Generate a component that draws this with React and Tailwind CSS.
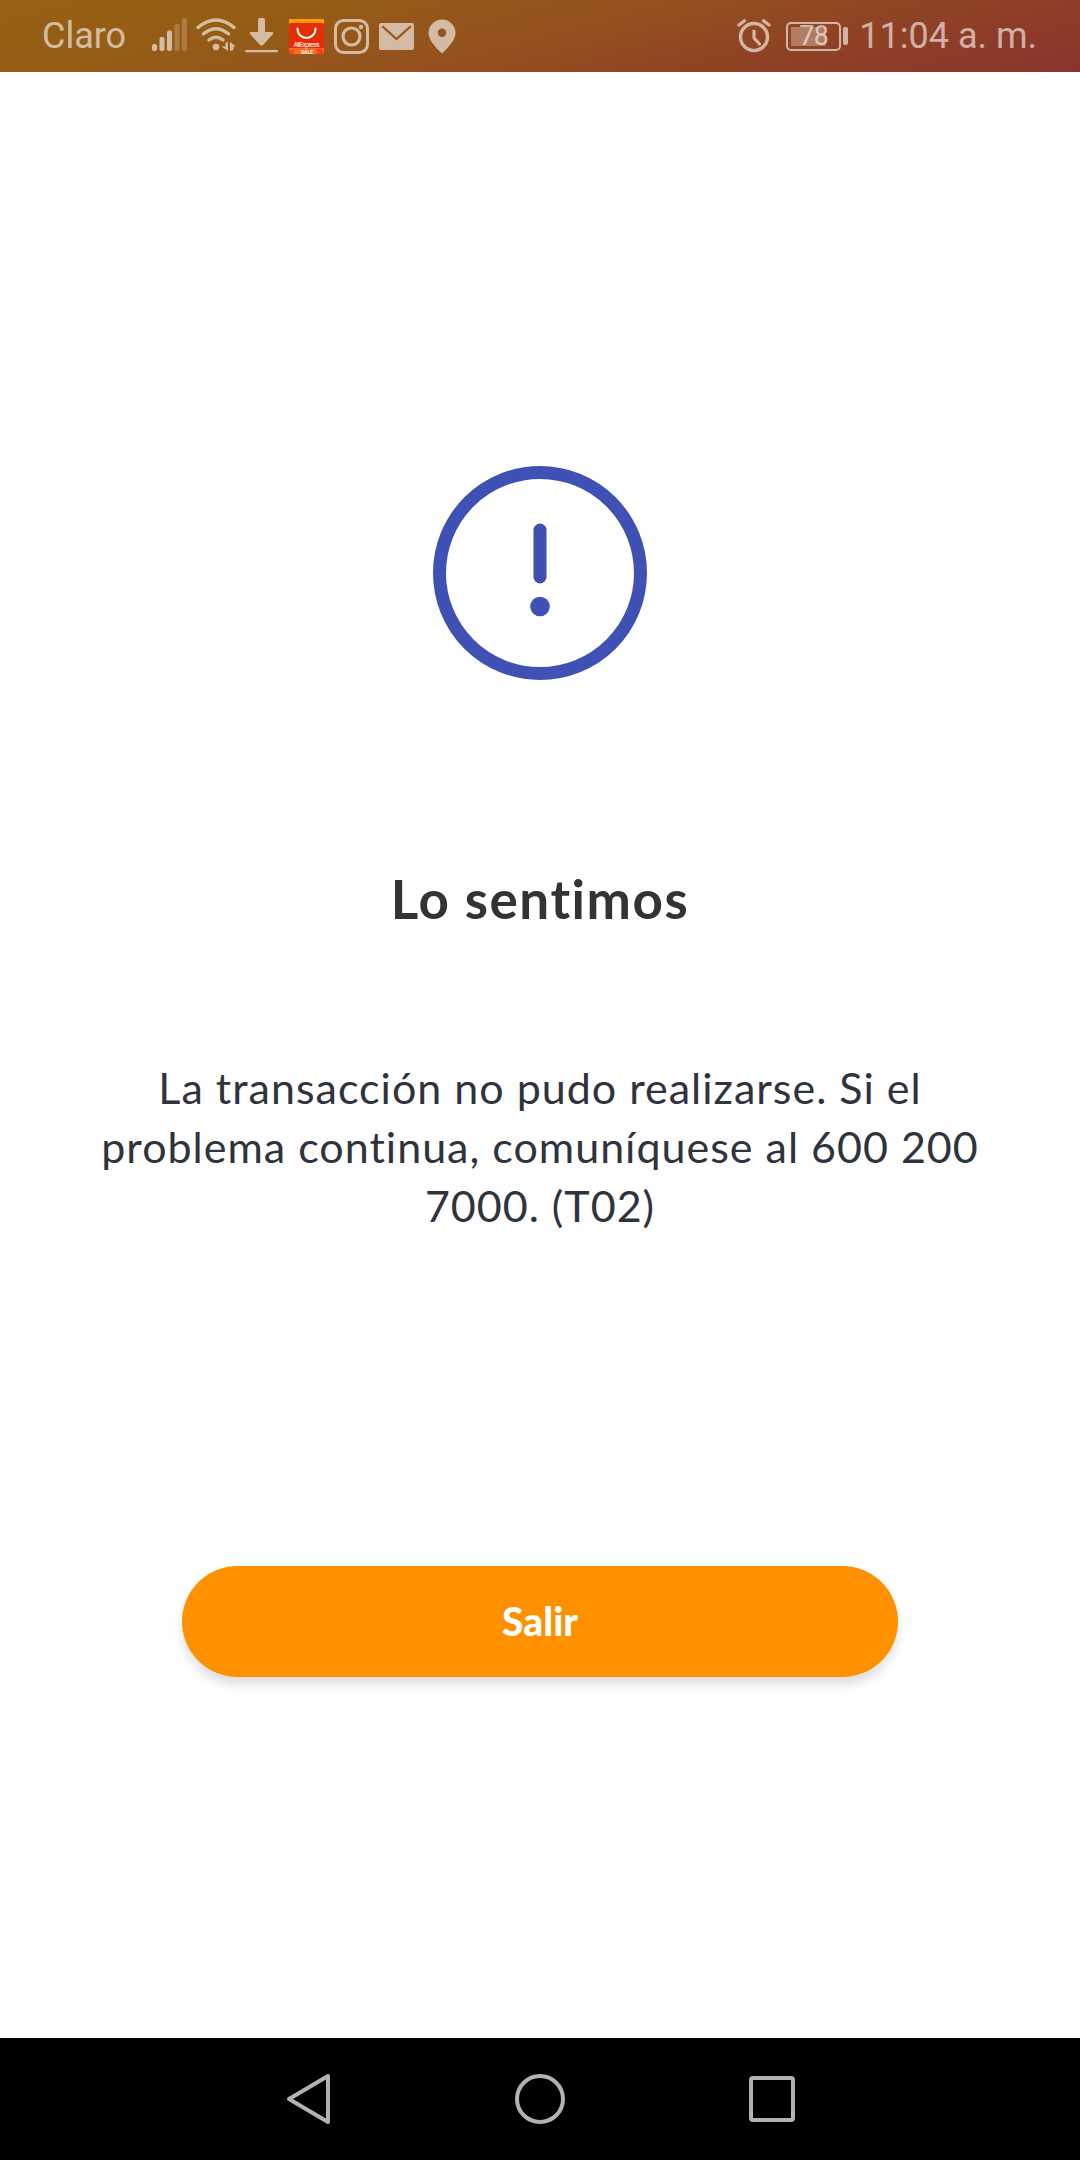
import React from 'react';

const SignalIcon = () => (
  <svg className="w-9 h-9 ml-[25px]" viewBox="0 0 36 36" fill="white">
    <rect x="1" y="26" width="5" height="7" rx="2" fillOpacity="0.6" />
    <rect x="8.5" y="19" width="5" height="14" rx="2" fillOpacity="0.6" />
    <rect x="16" y="12.5" width="5" height="20.5" rx="2" fillOpacity="0.6" />
    <rect x="23.5" y="6" width="5" height="27" rx="2" fillOpacity="0.2" />
    <rect x="31" y="0" width="5" height="33" rx="2" fillOpacity="0.2" />
  </svg>
);

const WifiIcon = () => (
  <svg className="w-10 h-9 ml-[9px]" viewBox="0 0 40 36" fill="none" stroke="white" strokeWidth="3.4" strokeLinecap="round">
    <g opacity="0.6">
      <path d="M2 9.5Q20 -5.5 38 9.5" />
      <path d="M7.5 15.8Q20 5.5 32.5 15.8" />
      <path d="M13 22Q20 16.5 27 22" />
      <circle cx="20" cy="29" r="3.3" fill="white" stroke="none" />
      <path d="M32 24V33L25.5 28.5H29.5V25ZM34 24L40 28.5H37.5V32L34 33Z" fill="white" stroke="none" />
    </g>
  </svg>
);

const DownloadIcon = () => (
  <svg className="w-[33px] h-9 ml-[9px]" viewBox="0 0 33 36" fill="white" fillOpacity="0.6">
    <path d="M13 2Q13 0 15 0H18Q20 0 20 2V14H27Q29 14 28 16L18 27Q16.500 28.500 15 27L5 16Q4 14 6 14H13Z" />
    <rect x="0" y="32" width="33" height="2.200" rx="1" />
  </svg>
);

const AliExpressIcon = () => (
  <svg className="w-[35px] h-[35px] ml-[11px]" viewBox="0 0 35 35">
    <rect width="35" height="35" fill="#ff9a06" />
    <path d="M0 6Q0 4 2 4H33Q35 4 35 6V29H0Z" fill="#e62e04" />
    <rect y="29" width="35" height="6" fill="#ff6a1f" />
    <path d="M0 31H6L3 35H0ZM27 30H33L35 35H29Z" fill="#ff3f1a" />
    <path d="M8.500 9.500C8.500 22 26.500 22 26.500 9.500" fill="none" stroke="white" strokeWidth="2" strokeLinecap="round" />
    <text x="17.500" y="27.500" textAnchor="middle" textLength="26" className="font-[Roboto,sans-serif] text-[7px]" fill="white">AliExpress</text>
    <text x="18" y="34.500" textAnchor="middle" className="font-[Roboto,sans-serif] text-[5px] font-bold" fill="white">SALE</text>
  </svg>
);

const InstagramIcon = () => (
  <svg className="w-[35px] h-[35px] ml-[10px]" viewBox="0 0 35 35" fill="none" stroke="white">
    <g opacity="0.6">
      <rect x="1.500" y="1.500" width="32" height="32" rx="8" strokeWidth="3" />
      <circle cx="17.500" cy="17.500" r="8.500" strokeWidth="3.200" />
      <circle cx="27" cy="8" r="2.200" fill="white" stroke="none" />
    </g>
  </svg>
);

const MailIcon = () => (
  <svg className="w-[35px] h-[35px] ml-[10px]" viewBox="0 0 35 35">
    <path d="M2 4H33Q35 4 35 6V29Q35 31 33 31H2Q0 31 0 29V6Q0 4 2 4ZM2.500 8L17.500 21.500L32.500 8L31 6.500L17.500 18.500L4 6.500Z" fill="white" fillOpacity="0.6" fillRule="evenodd" />
  </svg>
);

const PinIcon = () => (
  <svg className="w-[28px] h-[35px] ml-[14px]" viewBox="0 0 28 35">
    <path d="M14 0.500A13.500 13.500 0 0 1 27.500 14C27.500 20 22 27 14 34.500C6 27 0.500 20 0.500 14A13.500 13.500 0 0 1 14 0.500ZM14 9.500A4.200 4.200 0 1 0 14 17.900A4.200 4.200 0 1 0 14 9.500Z" fill="white" fillOpacity="0.6" fillRule="evenodd" />
  </svg>
);

const AlarmIcon = () => (
  <svg className="w-[34px] h-[34px]" viewBox="0 0 34 34" fill="none" stroke="white" strokeLinecap="round">
    <g opacity="0.6">
      <circle cx="17" cy="18" r="13.500" strokeWidth="3.400" />
      <path d="M2 6L7.500 1.800M26.500 1.800L32 6" strokeWidth="3.200" />
      <path d="M17 12V19L22.500 25" strokeWidth="3.200" strokeLinejoin="round" />
    </g>
  </svg>
);

const Battery = () => (
  <div className="flex items-center ml-[15px] gap-[2px]">
    <div className="w-[55px] h-[29px] p-[3px] rounded-[5px] border-2 border-white/60 flex">
      <div className="grow bg-[linear-gradient(90deg,rgba(255,255,255,0.3)_78%,transparent_78%)] flex items-center justify-center text-[27px] leading-none tracking-[-0.5px] text-white/60">
        <span>78</span>
      </div>
    </div>
    <div className="w-[5px] h-[18px] rounded-[2px] bg-white/60" />
  </div>
);

const StatusBar = () => (
  <header className="h-[72px] shrink-0 flex items-center pl-[42px] pr-[43px] bg-[linear-gradient(165deg,#966014_0%,#955c16_25%,#944f20_53%,#904224_72%,#88342f_100%)] font-[Roboto,sans-serif] text-[36px] leading-none text-white/60">
    <span>Claro</span>
    <SignalIcon />
    <WifiIcon />
    <DownloadIcon />
    <AliExpressIcon />
    <InstagramIcon />
    <MailIcon />
    <PinIcon />
    <div className="ml-auto flex items-center">
      <AlarmIcon />
      <Battery />
      <span className="ml-[11px]">11:04 a. m.</span>
    </div>
  </header>
);

const AlertIcon = () => (
  <svg className="w-[216px] h-[216px] mt-[393px]" viewBox="0 0 216 216">
    <circle cx="108" cy="108" r="100.500" fill="none" stroke="#3f51b5" strokeWidth="13" />
    <path d="M108 65V112" stroke="#3f51b5" strokeWidth="13" strokeLinecap="round" />
    <circle cx="108" cy="141.500" r="9.800" fill="#3f51b5" />
  </svg>
);

const NavBar = () => (
  <nav className="h-[122px] shrink-0 bg-black flex items-center px-[285px] justify-between">
    <svg className="w-[46px] h-[52px]" viewBox="0 0 46 52" fill="none" stroke="#b2b2b2" strokeWidth="4" strokeLinejoin="round">
      <path d="M43 3V49L4 26Z" />
    </svg>
    <svg className="w-[50px] h-[50px]" viewBox="0 0 50 50" fill="none" stroke="#b2b2b2" strokeWidth="4">
      <circle cx="25" cy="25" r="23" />
    </svg>
    <svg className="w-[46px] h-[46px]" viewBox="0 0 46 46" fill="none" stroke="#b2b2b2" strokeWidth="4">
      <rect x="2" y="2" width="42" height="42" rx="2" />
    </svg>
  </nav>
);

export default function App() {
  return (
    <div className="w-[1080px] h-[2160px] flex flex-col bg-white overflow-hidden">
      <StatusBar />
      <main className="grow flex flex-col items-center font-[Lato,sans-serif]">
        <AlertIcon />
        <h1 className="mt-[184px] text-[53px] leading-[68px] font-bold tracking-[1.5px] text-[#333333]">Lo sentimos</h1>
        <p className="mt-[125px] text-[43px] leading-[59px] text-center text-[#2e333d] whitespace-nowrap">
          <span className="block tracking-[1px]">La transacción no pudo realizarse. Si el</span>
          <span className="block tracking-[1px]">problema continua, comuníquese al 600 200</span>
          <span className="block tracking-[1px]">7000. (T02)</span>
        </p>
        <button className="mt-[331px] w-[716px] h-[111px] rounded-full bg-[#ff9100] text-white text-[39px] font-black shadow-[0_8px_10px_rgba(0,0,0,0.12)]">
          Salir
        </button>
      </main>
      <NavBar />
    </div>
  );
}
